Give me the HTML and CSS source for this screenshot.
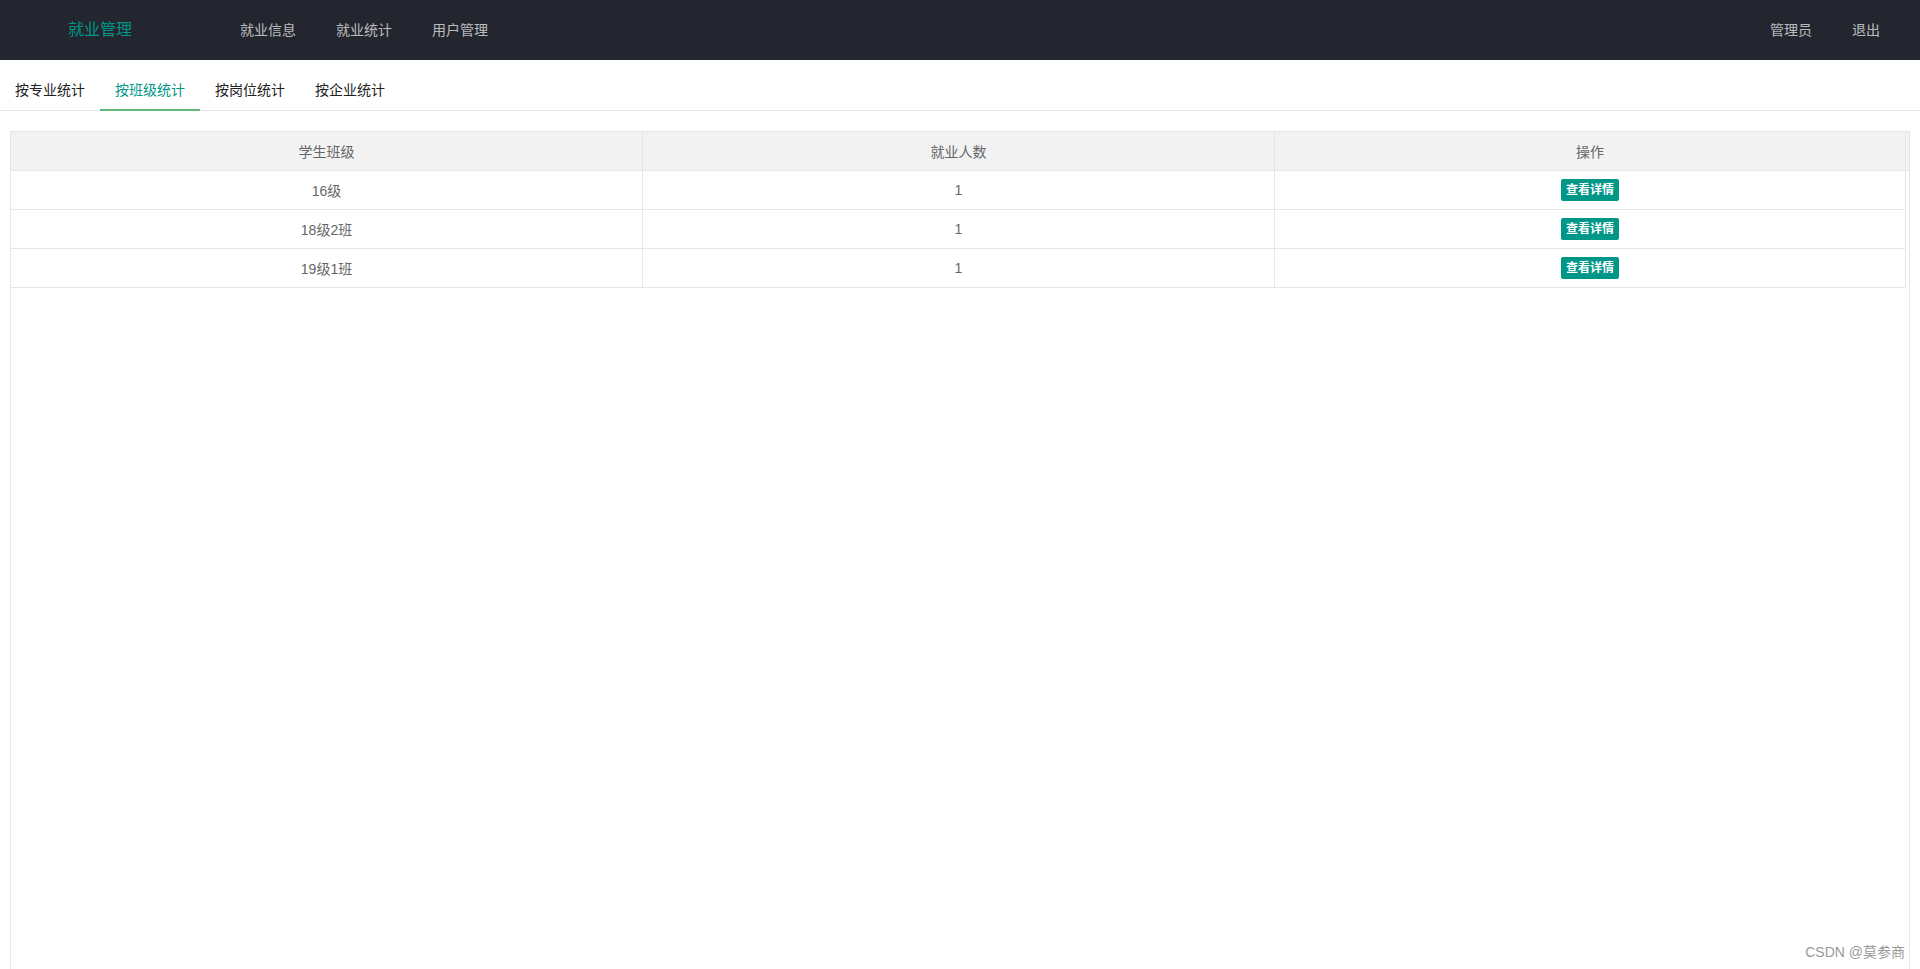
FILE: index.html
```html
<!doctype html>
<html>
<head>
    <meta charset="utf-8">
    <title>就业管理</title>

    <link rel="stylesheet" href="styles.css">
</head>

<body>
    <div class="header">
        <div class="logo">就业管理</div>
        <ul class="nav">
            <li><a>就业信息</a></li>
            <li><a>就业统计</a></li>
            <li><a>用户管理</a></li>
        </ul>
        <ul class="nav nav-right">
            <li><a>管理员</a></li>
            <li><a>退出</a></li>
        </ul>
    </div>

    <div class="tab">
        <ul class="tab-title">
            <li>按专业统计</li>
            <li class="this">按班级统计</li>
            <li>按岗位统计</li>
            <li>按企业统计</li>
        </ul>
        <div class="tab-content">
            <div class="table-view">
                <div class="table-head">
                    <table>
                        <tr>
                            <th>学生班级</th>
                            <th>就业人数</th>
                            <th class="last">操作</th>
                        </tr>
                    </table>
                </div>
                <div class="table-body">
                    <table>
                        <tr>
                            <td>16级</td>
                            <td>1</td>
                            <td class="last"><a class="btn-xs">查看详情</a></td>
                        </tr>
                        <tr>
                            <td>18级2班</td>
                            <td>1</td>
                            <td class="last"><a class="btn-xs">查看详情</a></td>
                        </tr>
                        <tr>
                            <td>19级1班</td>
                            <td>1</td>
                            <td class="last"><a class="btn-xs">查看详情</a></td>
                        </tr>
                    </table>
                </div>
            </div>
        </div>
    </div>

    <div class="watermark">CSDN @莫参商</div>
</body>
</html>
```

FILE: styles.css
```css
html, body {
    margin: 0;
    padding: 0;
    overflow: hidden;
    height: 100%;
}

body {
    font: 14px "Liberation Sans", "Noto Sans CJK SC", sans-serif;
    color: #222;
    background: #fff;
}

ul {
    list-style: none;
    margin: 0;
    padding: 0;
}

.header {
    display: flex;
    height: 60px;
    background: #23262e;
}

.logo {
    width: 200px;
    line-height: 60px;
    text-align: center;
    font-size: 16px;
    color: #009688;
}

.nav {
    display: flex;
    padding: 0 20px;
}

.nav li a {
    display: block;
    padding: 0 20px;
    line-height: 60px;
    color: rgba(255, 255, 255, .7);
}

.nav-right {
    margin-left: auto;
}

.tab {
    margin: 10px 0 0;
}

.tab-title {
    display: flex;
    height: 40px;
    border-bottom: 1px solid #e6e6e6;
}

.tab-title li {
    min-width: 65px;
    padding: 0 15px;
    line-height: 40px;
    text-align: center;
    position: relative;
}

.tab-title li.this {
    color: #009688;
}

.tab-title li.this:after {
    content: "";
    position: absolute;
    left: 0;
    right: 0;
    bottom: -1px;
    border-bottom: 2px solid #5fb878;
}

.tab-content {
    padding: 10px 10px 0;
}

.table-view {
    margin-top: 10px;
    height: 838px;
    border: 1px solid #e6e6e6;
    border-bottom: none;
}

.table-view table {
    width: 1895px;
    border-collapse: collapse;
    table-layout: fixed;
    color: #666;
}

.table-head {
    background: #f2f2f2;
    border-bottom: 1px solid #e6e6e6;
}

.table-view th,
.table-view td {
    width: 631px;
    height: 38px;
    padding: 0;
    text-align: center;
    font-weight: normal;
    border-right: 1px solid #e6e6e6;
}

.table-view th.last,
.table-view td.last {
    width: 630px;
}

.table-body td {
    border-bottom: 1px solid #e6e6e6;
}

.btn-xs {
    display: inline-block;
    height: 22px;
    line-height: 22px;
    padding: 0 5px;
    font-size: 12px;
    font-weight: bold;
    color: #fff;
    background: #009688;
    border-radius: 2px;
    vertical-align: middle;
}

.watermark {
    position: absolute;
    right: 15px;
    bottom: 8px;
    font-size: 14px;
    color: #999;
}
```
